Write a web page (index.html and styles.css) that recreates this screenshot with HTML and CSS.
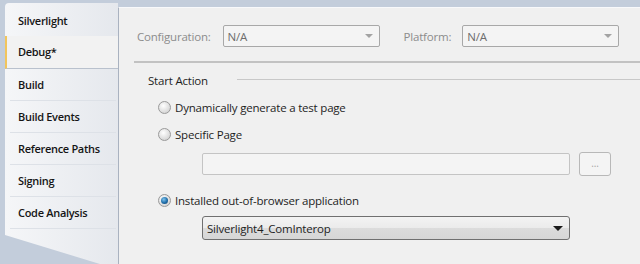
FILE: index.html
```html
<!DOCTYPE html>
<html lang="en">
<head>
  <meta charset="UTF-8" />
  <title>Project Properties - Debug</title>
  <link rel="stylesheet" href="styles.css">
</head>
<body>
  <div class="window">
    <ul class="tabs">
      <li class="tab">Silverlight</li>
      <li class="tab active">Debug*</li>
      <li class="tab">Build</li>
      <li class="tab">Build Events</li>
      <li class="tab">Reference Paths</li>
      <li class="tab">Signing</li>
      <li class="tab">Code Analysis</li>
    </ul>

    <div class="panel">
      <div class="config-row">
        <span class="dim">Configuration:</span>
        <div class="combo disabled"><span>N/A</span><i class="arrow"></i></div>
        <span class="dim platform">Platform:</span>
        <div class="combo disabled"><span>N/A</span><i class="arrow"></i></div>
      </div>

      <div class="divider"></div>

      <div class="group">
        <div class="group-title"><span>Start Action</span><span class="rule"></span></div>

        <label class="radio first"><span class="dot"></span>Dynamically generate a test page</label>
        <label class="radio"><span class="dot"></span>Specific Page</label>

        <div class="page-row">
          <div class="textbox"></div>
          <div class="browse">...</div>
        </div>

        <label class="radio oob"><span class="dot checked"></span>Installed out-of-browser application</label>
        <div class="combo app"><span>Silverlight4_ComInterop</span><i class="arrow"></i></div>
      </div>
    </div>
  </div>
</body>
</html>
```

FILE: styles.css
```css
* {
  box-sizing: border-box;
}

body {
  margin: 0;
  width: 640px;
  height: 264px;
  overflow: hidden;
  background: #c3cddb;
  font-family: 'Open Sans', 'Segoe UI', sans-serif;
  font-size: 11.5px;
  letter-spacing: -0.2px;
  color: #1e1e1e;
}

.window {
  display: flex;
  height: 264px;
}

/* left tab strip */
.tabs {
  list-style: none;
  margin: 3px 0 0 5px;
  padding: 2px 0 0;
  width: 113px;
  background: linear-gradient(to right, #f5f6f8, #e5e8ed);
  border-top-left-radius: 4px;
  clip-path: polygon(0 0, 100% 0, 100% 100%, 84% 100%, 0 232px);
}

.tab {
  height: 32px;
  line-height: 31px;
  padding-left: 13px;
  font-size: 11px;
  font-weight: 600;
  letter-spacing: -0.3px;
  color: #151515;
  border-bottom: 1px solid #dde1e7;
  margin: 0 2px 0 5px;
  text-indent: -5px;
}

.tab:first-child {
  border-bottom: 1px solid #b9c1cd;
  margin: 0;
  text-indent: 0;
}

.tab.active {
  position: relative;
  z-index: 1;
  margin: -1px -1px 0 0;
  text-indent: 0;
  height: 33px;
  background: #f2f2f2;
  border-left: 2px solid #f2c55c;
  border-bottom: 1px solid #b9c1cd;
  padding-left: 11px;
}

/* right content panel */
.panel {
  flex: 1;
  margin-top: 7px;
  background: #f0f0f0;
  border-left: 1px solid #a9b2c0;
  border-top: 1px solid #f8f9fb;
  padding: 17px 0 0 18px;
}

.config-row {
  display: flex;
  align-items: center;
  height: 22px;
}

.dim {
  color: #8c8c8c;
  margin-right: 12px;
}

.platform {
  margin-left: 24px;
  margin-right: 11px;
}

.combo {
  display: flex;
  align-items: center;
  justify-content: space-between;
  width: 157px;
  height: 22px;
  padding: 0 6px 0 4px;
  border: 1px solid #a8a8a8;
  border-radius: 2px;
  background: #f4f4f4;
}

.combo.disabled span {
  color: #6d6d6d;
}

.arrow {
  width: 0;
  height: 0;
  border-left: 4px solid transparent;
  border-right: 4px solid transparent;
  border-top: 4px solid #a3a3a3;
}

.divider {
  margin: 14px 0 0 -3px;
  height: 2px;
  background: #c2c2c2;
}

.group {
  padding-left: 11px;
}

.group-title {
  display: flex;
  align-items: center;
  height: 16px;
  margin-top: 9px;
}

.rule {
  flex: 1;
  height: 1px;
  background: #c8c8c8;
  margin-left: 29px;
  margin-top: -2px;
}

.radio {
  display: flex;
  align-items: center;
  height: 18px;
  margin-top: 9px;
  margin-left: 10px;
}

.radio.first {
  margin-top: 10px;
}

.radio.oob {
  margin-top: 15px;
}

.dot {
  width: 13px;
  height: 13px;
  border-radius: 50%;
  border: 1px solid #9a9a9a;
  background: radial-gradient(circle at 40% 35%, #ffffff 0, #e6e6e6 45%, #c9c9c9 100%);
  margin-right: 4px;
  display: flex;
  align-items: center;
  justify-content: center;
}

.dot.checked::after {
  content: "";
  width: 7px;
  height: 7px;
  border-radius: 50%;
  background: radial-gradient(circle at 40% 35%, #7fc4ee 0, #1e6ca8 55%, #143e66 100%);
}

.page-row {
  display: flex;
  align-items: center;
  margin: 9px 0 0 54px;
}

.textbox {
  width: 368px;
  height: 22px;
  border: 1px solid #c4c4c4;
  border-radius: 2px;
  background: #f4f4f4;
}

.browse {
  width: 32px;
  height: 24px;
  margin-left: 9px;
  border: 1px solid #b8b8b8;
  border-radius: 3px;
  background: #f4f4f4;
  color: #a5a5a5;
  font-size: 10px;
  text-align: center;
  line-height: 20px;
}

.combo.app {
  width: 368px;
  height: 24px;
  margin: 7px 0 0 54px;
  border-color: #707070;
  border-radius: 3px;
  background: linear-gradient(#f3f3f3, #ebebeb 50%, #dcdcdc 51%, #d6d6d6);
}

.combo.app .arrow {
  border-top-color: #1a1a1a;
  border-left-width: 5px;
  border-right-width: 5px;
  border-top-width: 5px;
}
```
